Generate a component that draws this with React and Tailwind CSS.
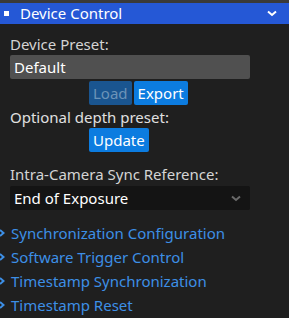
import React from 'react';

const font = { fontFamily: '"Noto Sans", "Open Sans", sans-serif' };

function Chevron({ className }) {
  return (
    <svg width="10" height="7" viewBox="0 0 10 7" className={className}>
      <path d="M1 1.5 L5 5 L9 1.5" fill="none" stroke="currentColor" strokeWidth="2" />
    </svg>
  );
}

function Section({ title }) {
  return (
    <div className="flex items-center h-6">
      <svg width="6" height="8" viewBox="0 0 6 8" className="text-[#3d8fe6] ml-[-1px] mr-[6px]">
        <path d="M1 1 L4.5 4 L1 7" fill="none" stroke="currentColor" strokeWidth="2" />
      </svg>
      <span className="text-[#3d8fe6] text-[15px]">{title}</span>
    </div>
  );
}

export default function App() {
  return (
    <div className="w-[289px] h-[318px] bg-[#1f1f1f] overflow-hidden" style={font}>
      <div className="h-[3px] bg-[#3a3a3a]" />
      {/* Header */}
      <div className="h-[21px] bg-[#2558d6] flex items-center pl-[4px] pr-[12px]">
        <div className="w-[5px] h-[5px] bg-white mr-[11px]" />
        <span className="text-white text-[15px] leading-none flex-1">Device Control</span>
        <Chevron className="text-white" />
      </div>

      <div className="pl-[10px] pt-[10px]">
        <div className="text-[#d4d4d4] text-[15px] leading-[20px]">Device Preset:</div>
        <div className="mt-[1px] w-[240px] h-[24px] bg-[#505050] rounded-[2px] flex items-center pl-[4px] text-white text-[15px]">
          Default
        </div>
        <div className="flex gap-[2px] mt-[2px] ml-[79px]">
          <div className="h-[24px] px-[4px] bg-[#1a5590] rounded-[2px] text-[#6c93b8] text-[15px] flex items-center">Load</div>
          <div className="h-[24px] px-[4px] bg-[#0c7ce0] rounded-[2px] text-white text-[15px] flex items-center">Export</div>
        </div>
        <div className="text-[#e0e0e0] text-[15px] leading-[20px] mt-[2px]">Optional depth preset:</div>
        <div className="flex mt-[1px] ml-[79px]">
          <div className="h-[24px] px-[4px] bg-[#0c7ce0] rounded-[2px] text-white text-[15px] flex items-center">Update</div>
        </div>
        <div className="text-[#d4d4d4] text-[15px] leading-[20px] mt-[12px]">Intra-Camera Sync Reference:</div>
        <div className="mt-[2px] w-[240px] h-[24px] bg-[#141414] rounded-[2px] flex items-center pl-[4px] pr-[9px] text-white text-[15px]">
          <span className="flex-1">End of Exposure</span>
          <Chevron className="text-[#6a6a6a]" />
        </div>
      </div>

      <div className="mt-[11px]">
        <Section title="Synchronization Configuration" />
        <Section title="Software Trigger Control" />
        <Section title="Timestamp Synchronization" />
        <Section title="Timestamp Reset" />
      </div>
    </div>
  );
}
